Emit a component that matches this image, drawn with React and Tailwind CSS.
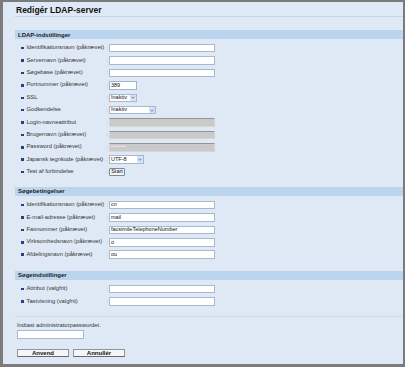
import React from 'react'

// Static form data for the LDAP edit page
const ldapRows = [
  { label: 'Identifikationsnavn (påkrævet)', kind: 'text' },
  { label: 'Servernavn (påkrævet)', kind: 'text' },
  { label: 'Søgebase (påkrævet)', kind: 'text' },
  { label: 'Portnummer (påkrævet)', kind: 'port', value: '389' },
  { label: 'SSL', kind: 'select', value: 'Inaktiv', width: 'w-[28px]' },
  { label: 'Godkendelse', kind: 'select', value: 'Inaktiv', width: 'w-[47px]' },
  { label: 'Login-navneattribut', kind: 'disabled' },
  { label: 'Brugernavn (påkrævet)', kind: 'disabled' },
  { label: 'Password (påkrævet)', kind: 'disabled', value: '••••••••' },
  { label: 'Japansk tegnkode (påkrævet)', kind: 'select', value: 'UTF-8', width: 'w-[35px]' },
  { label: 'Test af forbindelse', kind: 'button', value: 'Start' },
]

const searchRows = [
  { label: 'Identifikationsnavn (påkrævet)', kind: 'text', value: 'cn' },
  { label: 'E-mail-adresse (påkrævet)', kind: 'text', value: 'mail' },
  { label: 'Faxnummer (påkrævet)', kind: 'text', value: 'facsimileTelephoneNumber' },
  { label: 'Virksomhedsnavn (påkrævet)', kind: 'text', value: 'o' },
  { label: 'Afdelingsnavn (påkrævet)', kind: 'text', value: 'ou' },
]

const settingRows = [
  { label: 'Attribut (valgfrit)', kind: 'text' },
  { label: 'Tastvisning (valgfrit)', kind: 'text' },
]

function Field({ row }) {
  if (row.kind === 'port') {
    return (
      <div className="w-[28px] h-[8.5px] bg-white border border-[#9fb3c9] text-[5.5px] leading-none flex items-center pl-[1px] text-[#111]">
        {row.value}
      </div>
    )
  }
  if (row.kind === 'select') {
    return (
      <div className={`${row.width} h-[8.5px] bg-white border border-[#a7b9cf] flex items-center justify-between text-[5.5px] leading-none text-[#111]`}>
        <span className="pl-[1px]">{row.value}</span>
        <span className="h-full w-[6px] bg-[#d6e3f3] flex items-center justify-center">
          <svg width="4" height="3" viewBox="0 0 4 3"><path d="M0.4 0.6 L2 2.3 L3.6 0.6" fill="none" stroke="#4a6aa6" strokeWidth="0.8" /></svg>
        </span>
      </div>
    )
  }
  if (row.kind === 'disabled') {
    return (
      <div className="w-[106px] h-[8.5px] bg-[#cacaca] border-t border-t-[#949494] border-x border-b border-[#d6d6d6] text-[4.5px] leading-none flex items-center pl-[1px] text-[#eeeeee] tracking-[0.3px]">
        {row.value}
      </div>
    )
  }
  if (row.kind === 'button') {
    return (
      <div className="w-[16px] h-[8px] bg-[#f4f4f4] border border-[#7b8a9c] rounded-[1px] text-[5.5px] leading-none flex items-center justify-center text-[#111]">
        {row.value}
      </div>
    )
  }
  return (
    <div className="w-[106px] h-[8.5px] bg-white border border-[#a7b9cf] text-[5.5px] leading-none flex items-center pl-[1px] text-[#111]">
      {row.value}
    </div>
  )
}

function Section({ title, rows, className }) {
  return (
    <div className={className}>
      <div className="h-[9px] bg-[#bcd5ee] flex items-center pl-[3px] text-[6px] font-bold text-[#1a1a1a] leading-none">
        {title}
      </div>
      <div className="pt-[3px]">
        {rows.map((row, i) => (
          <div key={i} className="h-[12.4px] flex items-center">
            <span className="w-[2.5px] h-[2.5px] bg-[#233f85] ml-[6px] mr-[3px]" />
            <span className="w-[80px] text-[5.8px] leading-none text-[#333]">{row.label}</span>
            <span className="w-[2.5px] text-[5px] leading-none text-[#888]">:</span>
            <Field row={row} />
          </div>
        ))}
      </div>
    </div>
  )
}

export default function App() {
  return (
    <div className="w-[405px] h-[367px] bg-[#dfe9f5] border-l-[3px] border-t-2 border-r-2 border-b-[3px] border-[#7b7b7b] font-['Liberation_Sans',Arial,sans-serif] overflow-hidden">
      <div className="pl-[12px]">
        {/* Title */}
        <div className="pt-[4px] h-[14px] pl-[1px] text-[8.5px] font-bold text-[#111] leading-none">Redigér LDAP-server</div>
        <div className="h-px bg-[#c7d5e5]" />

        <Section title="LDAP-indstillinger" rows={ldapRows} className="mt-[13px]" />
        <Section title="Søgebetingelser" rows={searchRows} className="mt-[8.6px]" />
        <Section title="Søgeindstillinger" rows={settingRows} className="mt-[10px]" />

        <div className="mt-[8px] h-px bg-[#cfdbe8]" />

        {/* Admin password */}
        <div className="mt-[6px] pl-[2px] text-[5.8px] leading-none text-[#333]">Indtast administratorpasswordet.</div>
        <div className="mt-[2px] ml-[2px] w-[67px] h-[8.5px] bg-white border border-[#a7b9cf]" />

        <div className="mt-[10px] ml-[2px] flex gap-[4px]">
          <div className="w-[52px] h-[8.5px] bg-[#f6f6f6] border border-[#8a96a6] border-b-[#5f6b7a] flex items-center justify-center text-[6px] font-bold leading-none text-[#111]">Anvend</div>
          <div className="w-[52px] h-[8.5px] bg-[#f6f6f6] border border-[#8a96a6] border-b-[#5f6b7a] flex items-center justify-center text-[6px] font-bold leading-none text-[#111]">Annullér</div>
        </div>
      </div>
    </div>
  )
}
